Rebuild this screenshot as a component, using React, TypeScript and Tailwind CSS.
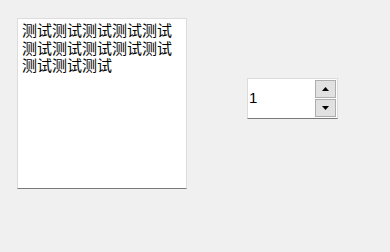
export default function App() {
  return (
    <div className="w-[390px] h-[252px] bg-[#f0f0f0] flex items-start pl-[17px] pt-[18px] overflow-hidden">
      {/* Text edit */}
      <div className="w-[170px] h-[171px] bg-white border border-[#dcdcdc] border-b-[#7a7a7a] pl-[4px] pt-[2px]">
        <p className="w-[156px] text-[15px] leading-[17.5px] text-black break-all font-['Noto_Sans_CJK_SC',sans-serif]">
          测试测试测试测试测试测试测试测试测试测试测试测试测试
        </p>
      </div>

      {/* Spin box */}
      <div className="ml-[60px] mt-[60px] w-[91px] h-[41px] bg-white border border-[#dcdcdc] border-b-[#7a7a7a] flex items-center pr-[1px]">
        <span className="flex-1 pl-[1px] text-[15px] text-black font-['Liberation_Sans',sans-serif]">1</span>
        <div className="flex flex-col w-[21px] self-stretch py-[1px] gap-[1px]">
          <button className="flex-1 flex items-center justify-center bg-[#e1e1e1] border border-[#adadad]">
            <svg width="7" height="4" viewBox="0 0 7 4">
              <path d="M3.5 0 L7 4 L0 4 Z" fill="#000" />
            </svg>
          </button>
          <button className="flex-1 flex items-center justify-center bg-[#e1e1e1] border border-[#adadad]">
            <svg width="7" height="4" viewBox="0 0 7 4">
              <path d="M0 0 L7 0 L3.5 4 Z" fill="#000" />
            </svg>
          </button>
        </div>
      </div>
    </div>
  );
}
